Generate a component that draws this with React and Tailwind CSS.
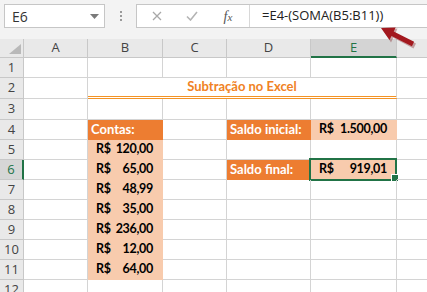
import React from "react";

const HDR = "font-['Open_Sans','Noto_Sans',sans-serif] text-[13px] text-[#444444]";
const CELLF = "font-['Lato','Liberation_Sans',sans-serif] font-bold text-[13px]";
const ACCF = "font-['Lato','Liberation_Sans',sans-serif] font-bold text-[12.5px] tracking-[-0.3px]";

function C({ children, className = "" }) {
  return (
    <div className={"relative box-border border-r border-b border-[#d4d4d4] flex items-center min-w-0 " + className}>
      {children}
    </div>
  );
}

function RowH({ n, active }) {
  return active ? (
    <div className="box-border border-b border-[#c8c8c8] border-r-2 border-r-[#217346] bg-[#d6d6d6] flex items-center justify-center text-[#217346] font-['Open_Sans','Noto_Sans',sans-serif] text-[13px]">
      {n}
    </div>
  ) : (
    <div className={"box-border border-b border-r border-[#c8c8c8] bg-[#e9e9e9] flex items-center justify-center " + HDR}>
      {n}
    </div>
  );
}

function Acc({ v }) {
  return (
    <div className={"flex w-full justify-between pl-[8px] pr-[9px] text-black " + ACCF}>
      <span>R$</span>
      <span>{v}</span>
    </div>
  );
}

function Peach({ v }) {
  return (
    <C className="bg-[#f8cbad] border-transparent">
      <Acc v={v} />
    </C>
  );
}

function Orange({ t }) {
  return (
    <C className={"bg-[#ed7d31] border-transparent pl-[3px] text-white " + CELLF}>
      <span className="whitespace-nowrap">{t}</span>
    </C>
  );
}

export default function App() {
  const vals = ["120,00", "65,00", "48,99", "35,00", "236,00", "12,00", "64,00"];
  return (
    <div className="relative w-[427px] h-[292px] overflow-hidden bg-white">
      {/* toolbar */}
      <div className="h-[39px] bg-[#f3f3f3] flex items-start pt-[4px]">
        <div className="ml-[4px] w-[101px] h-[24px] box-border bg-white border border-[#c6c6c6] flex items-center justify-between pl-[7px] pr-[5px]">
          <span className="font-['Open_Sans',sans-serif] text-[14px] text-[#333]">E6</span>
          <svg width="9" height="5" viewBox="0 0 9 5"><polygon points="0,0 9,0 4.5,5" fill="#7a7a7a" /></svg>
        </div>
        <div className="w-[31px] h-[24px] flex flex-col items-center justify-center gap-[2px]">
          <div className="w-[2px] h-[2px] bg-[#9a9a9a]" />
          <div className="w-[2px] h-[2px] bg-[#9a9a9a]" />
          <div className="w-[2px] h-[2px] bg-[#9a9a9a]" />
        </div>
        <div className="flex-1 h-[24px] box-border bg-white border border-r-0 border-[#c6c6c6] flex items-center">
          <div className="w-[40px] flex justify-center">
            <svg width="10" height="10" viewBox="0 0 10 10"><path d="M1 1L9 9M9 1L1 9" stroke="#a8a8a8" strokeWidth="1.3" /></svg>
          </div>
          <div className="w-[30px] flex justify-center">
            <svg width="12" height="10" viewBox="0 0 12 10"><path d="M1 5.5L4.5 9L11 1" stroke="#b4b4b4" strokeWidth="1.6" fill="none" /></svg>
          </div>
          <div className="w-[42px] flex justify-center">
            <span className="font-['Liberation_Serif',serif] italic text-[14px] text-[#555]">f<span className="text-[11px]">x</span></span>
          </div>
          <div className="self-stretch w-px bg-[#d8d8d8]" />
          <span className="pl-[12px] font-['Open_Sans',sans-serif] text-[13px] text-[#222] whitespace-nowrap">=E4-(SOMA(B5:B11))</span>
        </div>
      </div>

      {/* sheet */}
      <div className="grid w-[477px] grid-cols-[24px_64px_75px_64px_84px_86px_80px] grid-rows-[19px_20px_21px_21px_20px_20px_20px_20px_20px_20px_20px_20px_20px]">
        {/* header row */}
        <div className="relative box-border border-b border-r border-[#c8c8c8] bg-[#e9e9e9]">
          <svg className="absolute right-[2px] bottom-[3px]" width="12" height="10" viewBox="0 0 12 10"><polygon points="12,0 12,10 0,10" fill="#b9b9b9" /></svg>
        </div>
        {["A", "B", "C", "D"].map((l) => (
          <div key={l} className={"box-border border-b border-r border-[#c8c8c8] bg-[#e9e9e9] flex items-center justify-center " + HDR}>{l}</div>
        ))}
        <div className="box-border border-r border-[#c8c8c8] border-b-2 border-b-[#217346] bg-[#d4d4d4] flex items-center justify-center text-[#217346] font-['Open_Sans','Noto_Sans',sans-serif] text-[13px]">E</div>
        <div className={"box-border border-b border-r border-[#c8c8c8] bg-[#e9e9e9] flex items-center justify-center " + HDR}>F</div>

        {/* row 1 */}
        <RowH n={1} />
        <C /><C /><C /><C /><C /><C />

        {/* row 2 */}
        <RowH n={2} />
        <C />
        <div className="col-span-4 box-border border-r border-r-[#d4d4d4] border-b-[3px] border-double border-b-[#f39325] flex items-center justify-center">
          <span className={"text-[#f08224] " + CELLF}>Subtração no Excel</span>
        </div>
        <C />

        {/* row 3 */}
        <RowH n={3} />
        <C /><C /><C /><C /><C /><C />

        {/* row 4 */}
        <RowH n={4} />
        <C />
        <Orange t="Contas:" />
        <C />
        <Orange t="Saldo inicial:" />
        <C className="bg-[#f8cbad] border-transparent"><Acc v="1.500,00" /></C>
        <C />

        {/* row 5 */}
        <RowH n={5} />
        <C /><Peach v={vals[0]} /><C /><C /><C /><C />

        {/* row 6 */}
        <RowH n={6} active />
        <C /><Peach v={vals[1]} /><C />
        <Orange t="Saldo final:" />
        <C className="bg-[#f8cbad] border-transparent">
          <Acc v="919,01" />
          <div className="absolute -left-[2px] -top-[2px] w-[88px] h-[23px] box-border border-2 border-[#217346]" />
          <div className="absolute -right-[3px] -bottom-[3px] w-[6px] h-[6px] bg-[#217346] border border-white box-content" />
        </C>
        <C />

        {[7, 8, 9, 10, 11].map((n, i) => (
          <React.Fragment key={n}>
            <RowH n={n} />
            <C /><Peach v={vals[i + 2]} /><C /><C /><C /><C />
          </React.Fragment>
        ))}

        <RowH n={12} />
        <C /><C /><C /><C /><C /><C />
      </div>

      {/* arrow overlay */}
      <svg className="absolute left-0 top-0 pointer-events-none" width="427" height="292" viewBox="0 0 427 292">
        <polygon points="382,29 396,27 394,31.8 414.5,42 412,47 391.8,36.2 389.5,41" fill="#7a1016" opacity="0.35" transform="translate(1.5,1.5)" />
        <polygon points="381,28 395.7,27.5 393.7,31.6 414.1,41.8 411.9,46.2 391.5,36 389.5,40.1" fill="#a3181e" />
      </svg>
    </div>
  );
}
